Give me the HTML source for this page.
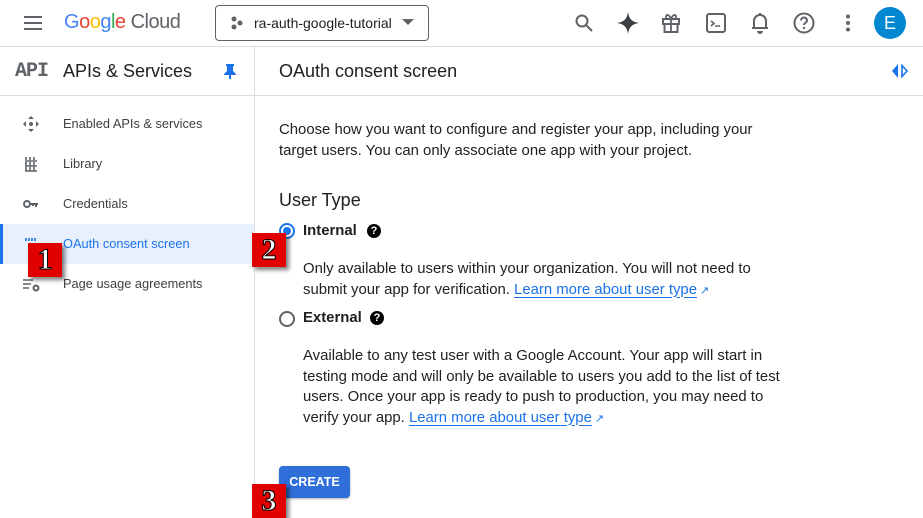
<!DOCTYPE html>
<html><head><style>
*{margin:0;padding:0;box-sizing:border-box}
body{width:923px;height:518px;overflow:hidden;background:#fff;font-family:"Liberation Sans",Arial,sans-serif;color:#202124;position:relative}
.a{position:absolute}
.t{font-size:12.8px;color:#3c4043}
.p{font-size:14.9px;line-height:20.5px;color:#202124}
a{color:#1a73e8;text-decoration:underline;text-underline-offset:3px}
.badge{position:absolute;width:34px;height:34px;background:#e00000;color:#fff;font-family:"Liberation Serif",serif;font-weight:bold;font-size:30px;line-height:34px;text-align:center;box-shadow:3px 3px 4px rgba(0,0,0,.5);-webkit-text-stroke:1px #000}
.ic{position:absolute}
</style></head><body>
<div class="a" style="left:0;top:46px;width:923px;height:1px;background:#dadce0"></div>
<svg class="ic" style="left:23px;top:15px" width="20" height="16"><path d="M1 2h18M1 8h18M1 14h18" stroke="#5f6368" stroke-width="2"/></svg>
<div class="a" style="left:64px;top:11px;font-size:20px;letter-spacing:-0.5px"><span style="color:#4285f4">G</span><span style="color:#ea4335">o</span><span style="color:#fbbc05">o</span><span style="color:#4285f4">g</span><span style="color:#34a853">l</span><span style="color:#ea4335">e</span><span style="color:#5f6368"> Cloud</span></div>
<div class="a" style="left:215px;top:5px;width:214px;height:36px;border:1px solid #5f6368;border-radius:4px"></div>
<svg class="ic" style="left:230px;top:16px" width="14" height="14"><circle cx="4" cy="3" r="2.5" fill="#5f6368"/><circle cx="4" cy="11" r="2.5" fill="#5f6368"/><circle cx="10" cy="7" r="2.5" fill="#5f6368"/></svg>
<div class="a" style="left:254px;top:15px;font-size:14px;color:#202124">ra-auth-google-tutorial</div>
<svg class="ic" style="left:402px;top:19px" width="12" height="7"><path d="M0 0h12L6 6z" fill="#5f6368"/></svg>
<svg class="ic" style="left:574px;top:13px" width="20" height="20"><circle cx="8" cy="8" r="5.5" fill="none" stroke="#5f6368" stroke-width="2"/><path d="M12 12l6 6" stroke="#5f6368" stroke-width="2"/></svg>
<svg class="ic" style="left:617px;top:12px" width="22" height="22"><path d="M11 0C12 7 15 10 22 11C15 12 12 15 11 22C10 15 7 12 0 11C7 10 10 7 11 0z" fill="#3c4043"/></svg>
<svg class="ic" style="left:661px;top:12px" width="20" height="22"><rect x="2" y="7" width="16" height="5" fill="none" stroke="#5f6368" stroke-width="2"/><rect x="3.5" y="12" width="13" height="8" fill="none" stroke="#5f6368" stroke-width="2"/><path d="M10 7v13M10 7C8 2 5 2 5 5s5 2 5 2c0 0 5 1 5-2s-3-3-5 2" fill="none" stroke="#5f6368" stroke-width="1.8"/></svg>
<svg class="ic" style="left:706px;top:13px" width="20" height="20"><rect x="1" y="1" width="18" height="18" rx="2" fill="none" stroke="#5f6368" stroke-width="2"/><path d="M5 8l3 2.5L5 13M9 13h5" stroke="#5f6368" stroke-width="1.6" fill="none"/></svg>
<svg class="ic" style="left:751px;top:12px" width="18" height="22"><path d="M3 16V9a6 6 0 0112 0v7h2M1 16h16" fill="none" stroke="#5f6368" stroke-width="2"/><path d="M9 1v2" stroke="#5f6368" stroke-width="2"/><path d="M6 19h6a3 3 0 01-6 0" fill="#5f6368"/></svg>
<svg class="ic" style="left:793px;top:12px" width="22" height="22"><circle cx="11" cy="11" r="9.5" fill="none" stroke="#5f6368" stroke-width="2"/><path d="M8 8.5a3 3 0 116 0c0 2-3 2.5-3 4.5" fill="none" stroke="#5f6368" stroke-width="2"/><circle cx="11" cy="16" r="1.2" fill="#5f6368"/></svg>
<svg class="ic" style="left:845px;top:14px" width="6" height="18"><circle cx="3" cy="2.5" r="2" fill="#5f6368"/><circle cx="3" cy="9" r="2" fill="#5f6368"/><circle cx="3" cy="15.5" r="2" fill="#5f6368"/></svg>
<div class="a" style="left:874px;top:7px;width:32px;height:32px;border-radius:50%;background:#0288d1;color:#fff;font-size:18px;line-height:32px;text-align:center">E</div>

<div class="a" style="left:254px;top:47px;width:1px;height:471px;background:#dadce0"></div>
<div class="a" style="left:0;top:95px;width:923px;height:1px;background:#dadce0"></div>
<div class="a" style="left:15px;top:60px;font-family:'Liberation Mono',monospace;font-weight:bold;font-size:20px;color:#5f6368;letter-spacing:-1px">API</div>
<div class="a" style="left:63px;top:61px;font-size:18px;color:#202124">APIs &amp; Services</div>
<svg class="ic" style="left:223px;top:63px" width="14" height="16"><path d="M3 1h8v2l-1 0v5l3 3v1H8v4H6v-4H1v-1l3-3V3H3z" fill="#1a73e8"/></svg>
<div class="a" style="left:279px;top:61px;font-size:18px;color:#202124">OAuth consent screen</div>
<svg class="ic" style="left:891px;top:64px" width="18" height="14"><path d="M7 0v14L1 7z" fill="#1a73e8"/><path d="M11 1.5v11L16 7z" fill="none" stroke="#1a73e8" stroke-width="1.6"/></svg>

<svg class="ic" style="left:23px;top:116px" width="16" height="16"><path d="M8 0l3 3H5zM8 16l3-3H5zM0 8l3-3v6zM16 8l-3-3v6z" fill="#5f6368"/><circle cx="8" cy="8" r="2" fill="#5f6368"/></svg>
<div class="a t" style="left:63px;top:116px">Enabled APIs &amp; services</div>
<svg class="ic" style="left:24px;top:156px" width="14" height="16"><path d="M2 1v3M6 1v3M10 1v3M1 5h12M2 6v4M6 6v4M10 6v4M1 10h12M2 11v4M6 11v4M10 11v4M1 15h12" stroke="#5f6368" stroke-width="1.6"/></svg>
<div class="a t" style="left:63px;top:156px">Library</div>
<svg class="ic" style="left:23px;top:199px" width="16" height="10"><circle cx="4" cy="5" r="3" fill="none" stroke="#5f6368" stroke-width="2"/><path d="M7 5h8M13 5v3M10 5v2" stroke="#5f6368" stroke-width="2"/></svg>
<div class="a t" style="left:63px;top:196px">Credentials</div>
<div class="a" style="left:0;top:224px;width:254px;height:40px;background:#e8f0fe"></div>
<div class="a" style="left:0;top:224px;width:3px;height:40px;background:#1a73e8"></div>
<svg class="ic" style="left:25px;top:237px" width="12" height="12"><path d="M1 1v3M4 1v3M7 1v3M10 1v3" stroke="#1a73e8" stroke-width="1.6"/></svg>
<div class="a t" style="left:63px;top:236px;color:#1a73e8">OAuth consent screen</div>
<svg class="ic" style="left:23px;top:278px" width="18" height="14"><path d="M0 2h10M0 6h8M0 10h6" stroke="#5f6368" stroke-width="1.6"/><circle cx="13" cy="10" r="2.5" fill="none" stroke="#5f6368" stroke-width="2"/></svg>
<div class="a t" style="left:63px;top:276px">Page usage agreements</div>

<div class="a p" style="left:279px;top:120px">Choose how you want to configure and register your app, including your<br>target users. You can only associate one app with your project.</div>
<div class="a" style="left:279px;top:190px;font-size:18px;color:#202124">User Type</div>
<div class="a" style="left:279px;top:223px;width:16px;height:16px;border:2px solid #1a73e8;border-radius:50%"></div>
<div class="a" style="left:283px;top:227px;width:8px;height:8px;background:#1a73e8;border-radius:50%"></div>
<div class="a" style="left:303px;top:223px;font-size:14.9px;font-weight:bold">Internal</div>
<div class="a" style="left:367px;top:224px;width:14px;height:14px;border-radius:50%;background:#000;color:#fff;font-size:11px;font-weight:bold;line-height:14px;text-align:center">?</div>
<div class="a p" style="left:303px;top:259px">Only available to users within your organization. You will not need to<br>submit your app for verification. <a>Learn more about user type</a><span style="color:#1a73e8;font-size:11px"> ↗</span></div>
<div class="a" style="left:279px;top:311px;width:16px;height:16px;border:2px solid #5f6368;border-radius:50%"></div>
<div class="a" style="left:303px;top:310px;font-size:14.9px;font-weight:bold">External</div>
<div class="a" style="left:370px;top:311px;width:14px;height:14px;border-radius:50%;background:#000;color:#fff;font-size:11px;font-weight:bold;line-height:14px;text-align:center">?</div>
<div class="a p" style="left:303px;top:346px">Available to any test user with a Google Account. Your app will start in<br>testing mode and will only be available to users you add to the list of test<br>users. Once your app is ready to push to production, you may need to<br>verify your app. <a>Learn more about user type</a><span style="color:#1a73e8;font-size:11px"> ↗</span></div>
<div class="a" style="left:279px;top:466px;width:71px;height:32px;background:#2f6fd9;border-radius:4px;color:#fff;font-size:12.5px;font-weight:bold;line-height:32px;text-align:center;box-shadow:0 1px 2px rgba(0,0,0,.3)">CREATE</div>

<div class="badge" style="left:28px;top:243px">1</div>
<div class="badge" style="left:252px;top:233px">2</div>
<div class="badge" style="left:252px;top:484px">3</div>
</body></html>
